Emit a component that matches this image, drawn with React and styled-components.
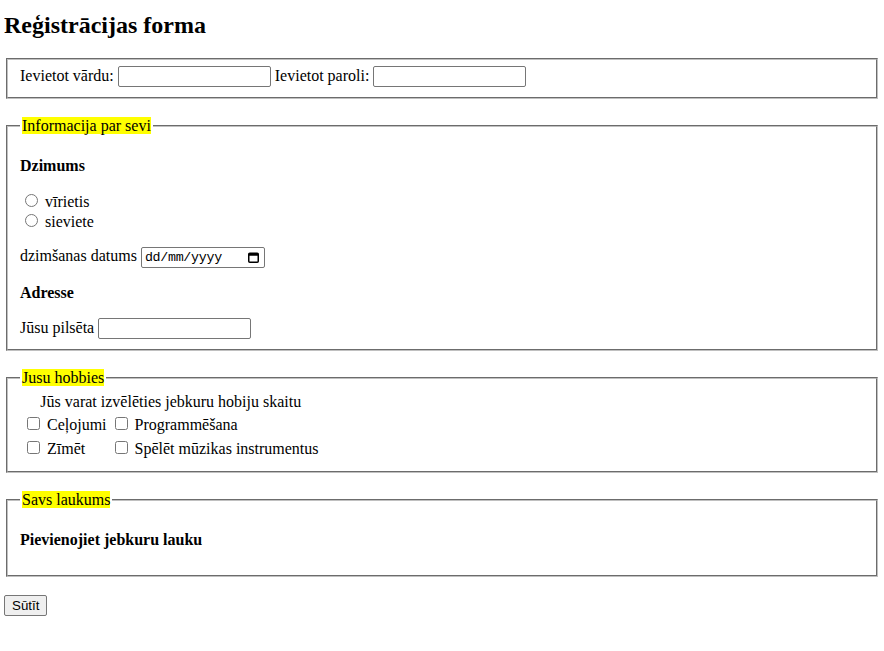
import React from "react";
import styled, { createGlobalStyle } from "styled-components";

const GlobalStyle = createGlobalStyle`
  body {
    margin: 4px;
    font-family: "Liberation Serif", "Times New Roman", serif;
    font-size: 16px;
    color: #000;
    background: #fff;
  }
`;

/* HEADER */
const Title = styled.h2`
  font-size: 24px;
  font-weight: bold;
  margin: 8px 0 19px;
`;

/* SECTIONS */
const Fieldset = styled.fieldset`
  margin: 0 2px 18.4px;
  padding: 0.35em 0.75em 0.625em;
  border: 2px groove rgb(192, 192, 192);
  min-inline-size: min-content;
`;

const Legend = styled.legend`
  padding: 0 2px;
`;

const Highlight = styled.span`
  background: #ffff00;
  color: #000;
`;

const Heading = styled.p`
  margin: 16px 0;
  font-weight: bold;
`;

const Para = styled.p`
  margin: 16px 0;
`;

/* INPUTS */
const TextInput = styled.input`
  width: 153px;
  height: 21px;
  box-sizing: border-box;
  font-family: "Liberation Sans", Arial, sans-serif;
  font-size: 13.33px;
  border: 1px solid #767676;
  border-radius: 2px;
  padding: 1px 2px;
  margin: 0;
`;

/* date field drawn by hand so the dd/mm/yyyy order doesn't depend on locale */
const DateField = styled.span`
  display: inline-flex;
  align-items: center;
  justify-content: space-between;
  width: 124px;
  height: 21px;
  box-sizing: border-box;
  padding: 0 5px 0 3px;
  border: 1px solid #767676;
  border-radius: 2px;
  font-family: "Liberation Mono", "Courier New", monospace;
  font-size: 13.33px;
  letter-spacing: -0.3px;
  color: #000;
  cursor: text;
`;

const CalendarIcon = () => (
  <svg width="11" height="11" viewBox="0 0 11 11" aria-hidden="true">
    <rect x="0.75" y="1.25" width="9.5" height="9" rx="1" fill="none" stroke="#000" strokeWidth="1.5" />
    <rect x="0.75" y="1.25" width="9.5" height="2.5" fill="#000" />
  </svg>
);

const Radio = styled.input`
  margin: 3px 3px 0 5px;
`;

const Check = styled.input`
  margin: 3px 3px 3px 4px;
`;

/* HOBBY TABLE */
const HobbyTable = styled.table`
  border-spacing: 2px;
`;

const Caption = styled.caption`
  text-align: center;
`;

const Cell = styled.td`
  padding: 1px;
`;

const SubmitButton = styled.button`
  font-family: "Liberation Sans", Arial, sans-serif;
  font-size: 13.33px;
  height: 21px;
  padding: 1px 7px;
  margin: 0;
  background: #efefef;
  border: 1px solid #767676;
  border-radius: 2px;
  color: #000;
`;

const hobbies = [
  ["Ceļojumi", "Programmēšana"],
  ["Zīmēt", "Spēlēt mūzikas instrumentus"],
];

const App = () => {
  return (
    <>
      <GlobalStyle />
      <Title>Reģistrācijas forma</Title>
      <form onSubmit={(e) => e.preventDefault()}>
        <Fieldset>
          Ievietot vārdu: <TextInput type="text" /> Ievietot paroli:{" "}
          <TextInput type="password" />
        </Fieldset>

        <Fieldset>
          <Legend>
            <Highlight>Informacija par sevi</Highlight>
          </Legend>
          <Heading>Dzimums</Heading>
          <Radio type="radio" name="dz" /> vīrietis
          <br />
          <Radio type="radio" name="dz" /> sieviete
          <Para>
            dzimšanas datums{" "}
            <DateField>
              <span>dd/mm/yyyy</span>
              <CalendarIcon />
            </DateField>
          </Para>
          <Heading>Adresse</Heading>
          Jūsu pilsēta <TextInput type="text" />
        </Fieldset>

        <Fieldset>
          <Legend>
            <Highlight>Jusu hobbies</Highlight>
          </Legend>
          <HobbyTable>
            <Caption>Jūs varat izvēlēties jebkuru hobiju skaitu</Caption>
            <tbody>
              {hobbies.map((row, i) => (
                <tr key={i}>
                  {row.map((h) => (
                    <Cell key={h}>
                      <Check type="checkbox" /> {h}
                    </Cell>
                  ))}
                </tr>
              ))}
            </tbody>
          </HobbyTable>
        </Fieldset>

        <Fieldset>
          <Legend>
            <Highlight>Savs laukums</Highlight>
          </Legend>
          <Heading>Pievienojiet jebkuru lauku</Heading>
        </Fieldset>

        <SubmitButton type="submit">Sūtīt</SubmitButton>
      </form>
    </>
  );
};

export default App;
